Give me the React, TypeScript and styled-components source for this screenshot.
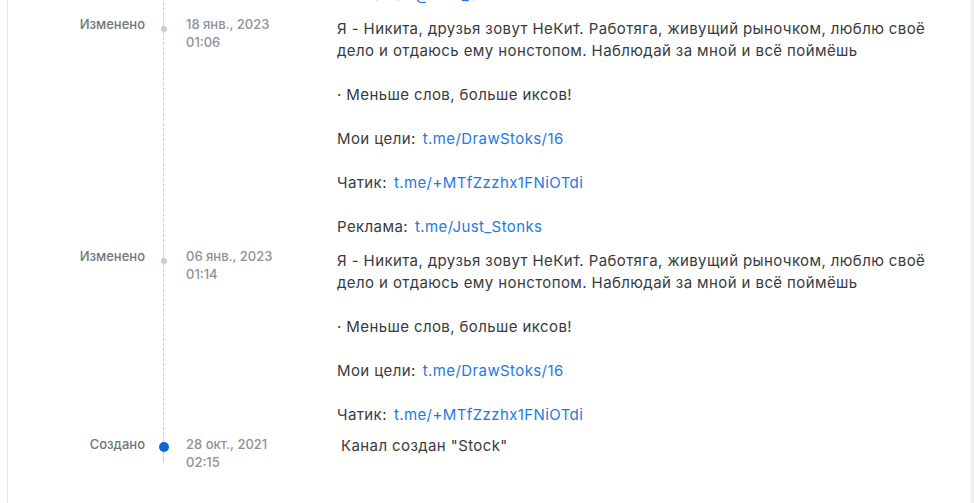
import React from "react";
import styled, { createGlobalStyle } from "styled-components";

const GlobalStyle = createGlobalStyle`
  html, body {
    margin: 0;
    padding: 0;
    background: #ffffff;
    overflow: hidden;
  }
  body {
    font-family: Inter, "Noto Sans", "Liberation Sans", sans-serif;
  }
`;

const Card = styled.div`
  margin-left: 7px;
  height: 503px;
  overflow: hidden;
  background: #fff;
  border-left: 1px solid #e7e8ea;
  border-right: 3px solid #efefef;
`;

const List = styled.div`
  margin-top: -63px; /* список прокручен, верхняя запись срезана */
`;

const Row = styled.div`
  display: grid;
  grid-template-columns: 137px 37px 155px 1fr;
`;

const Label = styled.div`
  text-align: right;
  font-size: 13px;
  line-height: 18px;
  font-weight: 500;
  color: #70757e;
`;

const Track = styled.div`
  display: flex;
  flex-direction: column;
  align-items: center;
`;

const Dash = styled.div<{ $h?: number }>`
  border-left: 1px dashed #c9cdd3;
  ${(p) => (p.$h !== undefined ? `height: ${p.$h}px;` : "flex: 1;")}
`;

const Dot = styled.div<{ $created?: boolean }>`
  width: ${(p) => (p.$created ? 10 : 6)}px;
  height: ${(p) => (p.$created ? 10 : 6)}px;
  border-radius: 50%;
  background: ${(p) => (p.$created ? "#0c64d6" : "#c7ccd2")};
  flex-shrink: 0;
`;

const DateCol = styled.div`
  padding-left: 4px;
  font-size: 13px;
  line-height: 18px;
  font-weight: 500;
  color: #8c929b;
`;

const Content = styled.div<{ $indent?: number; $top?: number }>`
  padding: ${(p) => p.$top ?? 3}px 20px 9px ${(p) => p.$indent ?? 0}px;
  max-width: 610px;
  font-size: 15px;
  letter-spacing: 0.4px;
  line-height: 22px;
  color: #383b40;
`;

const Para = styled.p`
  margin: 0 0 22px;
  &:last-child {
    margin-bottom: 0;
  }
`;

const Link = styled.a`
  color: #1d7ae3;
  text-decoration: none;
  margin-left: 7px;
`;

type Item = { label: string; link: string };

const bio =
  "Я - Никита, друзья зовут НеКит\u0301. Работяга, живущий рыночком, люблю своё дело и отдаюсь ему нонстопом. Наблюдай за мной и всё поймёшь";

function Links({ items }: { items: Item[] }) {
  return (
    <>
      {items.map((it) => (
        <Para key={it.label + it.link}>
          {it.label}:<Link href="#">{it.link}</Link>
        </Para>
      ))}
    </>
  );
}

type Entry = {
  label: string;
  date: string;
  time: string;
  created?: boolean;
  body: React.ReactNode;
};

const entries: Entry[] = [
  {
    label: "Изменено",
    date: "21 янв., 2023",
    time: "14:32",
    body: (
      <Links
        items={[
          { label: "Чатик", link: "t.me/+MTfZzzhx1FNiOTdi" },
          { label: "Реклама", link: "@Just_Stonks" },
        ]}
      />
    ),
  },
  {
    label: "Изменено",
    date: "18 янв., 2023",
    time: "01:06",
    body: (
      <>
        <Para>{bio}</Para>
        <Para>· Меньше слов, больше иксов!</Para>
        <Links
          items={[
            { label: "Мои цели", link: "t.me/DrawStoks/16" },
            { label: "Чатик", link: "t.me/+MTfZzzhx1FNiOTdi" },
            { label: "Реклама", link: "t.me/Just_Stonks" },
          ]}
        />
      </>
    ),
  },
  {
    label: "Изменено",
    date: "06 янв., 2023",
    time: "01:14",
    body: (
      <>
        <Para>{bio}</Para>
        <Para>· Меньше слов, больше иксов!</Para>
        <Links
          items={[
            { label: "Мои цели", link: "t.me/DrawStoks/16" },
            { label: "Чатик", link: "t.me/+MTfZzzhx1FNiOTdi" },
          ]}
        />
      </>
    ),
  },
  {
    label: "Создано",
    date: "28 окт., 2021",
    time: "02:15",
    created: true,
    body: <Para>Канал создан "Stock"</Para>,
  },
];

export default function App() {
  return (
    <>
      <GlobalStyle />
      <Card>
        <List>
          {entries.map((e, i) => (
            <Row key={i}>
              <Label>{e.label}</Label>
              <Track>
                <Dash $h={e.created ? 7 : 11} />
                <Dot $created={e.created} />
                {e.created ? <Dash $h={10} /> : <Dash />}
              </Track>
              <DateCol>
                {e.date}
                <br />
                {e.time}
              </DateCol>
              <Content $indent={e.created ? 4 : 0} $top={e.created ? 0 : 3}>
                {e.body}
              </Content>
            </Row>
          ))}
        </List>
      </Card>
    </>
  );
}
